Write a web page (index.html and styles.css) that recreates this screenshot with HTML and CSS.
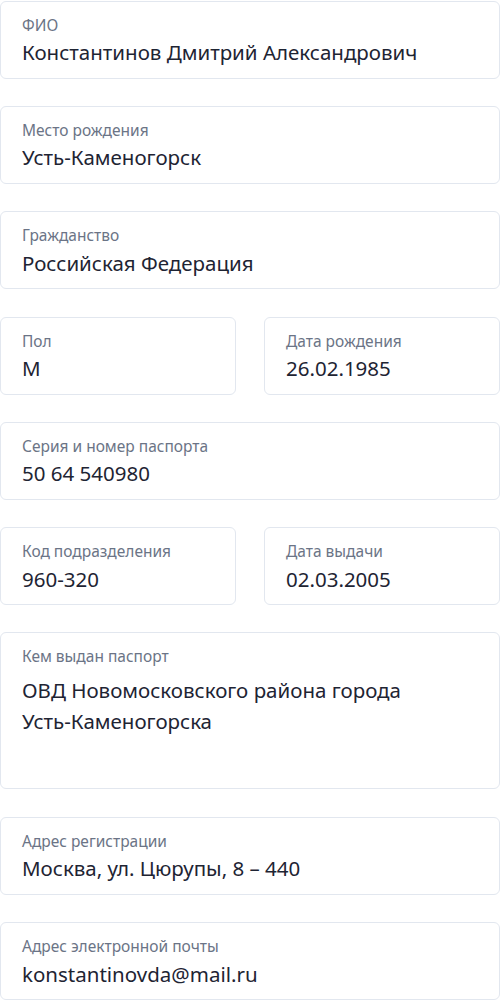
FILE: index.html
```html
<!DOCTYPE html>
<html lang="ru">
<head>
  <meta charset="UTF-8" />
  <meta name="viewport" content="width=device-width, initial-scale=1.0" />
  <title>Паспортные данные</title>
  <link rel="stylesheet" href="styles.css">
</head>
<body>
  <form class="profile">
    <div class="field">
      <span class="label">ФИО</span>
      <span class="value">Константинов Дмитрий Александрович</span>
    </div>
    <div class="field">
      <span class="label">Место рождения</span>
      <span class="value">Усть-Каменогорск</span>
    </div>
    <div class="field">
      <span class="label">Гражданство</span>
      <span class="value">Российская Федерация</span>
    </div>
    <div class="pair">
      <div class="field">
        <span class="label">Пол</span>
        <span class="value">М</span>
      </div>
      <div class="field">
        <span class="label">Дата рождения</span>
        <span class="value">26.02.1985</span>
      </div>
    </div>
    <div class="field">
      <span class="label">Серия и номер паспорта</span>
      <span class="value">50 64 540980</span>
    </div>
    <div class="pair">
      <div class="field">
        <span class="label">Код подразделения</span>
        <span class="value">960-320</span>
      </div>
      <div class="field">
        <span class="label">Дата выдачи</span>
        <span class="value">02.03.2005</span>
      </div>
    </div>
    <div class="field field-area">
      <span class="label">Кем выдан паспорт</span>
      <span class="value">ОВД Новомосковского района города <span class="nowrap">Усть-Каменогорска</span></span>
    </div>
    <div class="field">
      <span class="label">Адрес регистрации</span>
      <span class="value">Москва, ул. Цюрупы, 8 – 440</span>
    </div>
    <div class="field">
      <span class="label">Адрес электронной почты</span>
      <span class="value">konstantinovda@mail.ru</span>
    </div>
  </form>
</body>
</html>
```

FILE: styles.css
```css
:root {
  --border: #e2e7ef;
  --label: #6b7486;
  --text: #1e2433;
}
* {
  margin: 0;
  padding: 0;
  box-sizing: border-box;
}
body {
  font-family: 'Noto Sans', 'Open Sans', sans-serif;
  background: #fff;
  color: var(--text);
}
.profile {
  display: flex;
  flex-direction: column;
  gap: 27.3px;
  padding-top: 0.7px;
}
.pair {
  display: grid;
  grid-template-columns: 1fr 1fr;
  gap: 28px;
}
.field {
  display: flex;
  flex-direction: column;
  height: 78px;
  padding: 13px 21px 0;
  background: #fff;
  border: 1px solid var(--border);
  border-radius: 6px;
}
.label {
  font-size: 15.5px;
  line-height: 20px;
  color: var(--label);
}
.value {
  margin-top: 2.5px;
  font-size: 20.5px;
  line-height: 31px;
  color: var(--text);
}
.nowrap {
  white-space: nowrap;
}
.field-area {
  height: 157px;
}
.field-area .value {
  margin-top: 9px;
}
```
